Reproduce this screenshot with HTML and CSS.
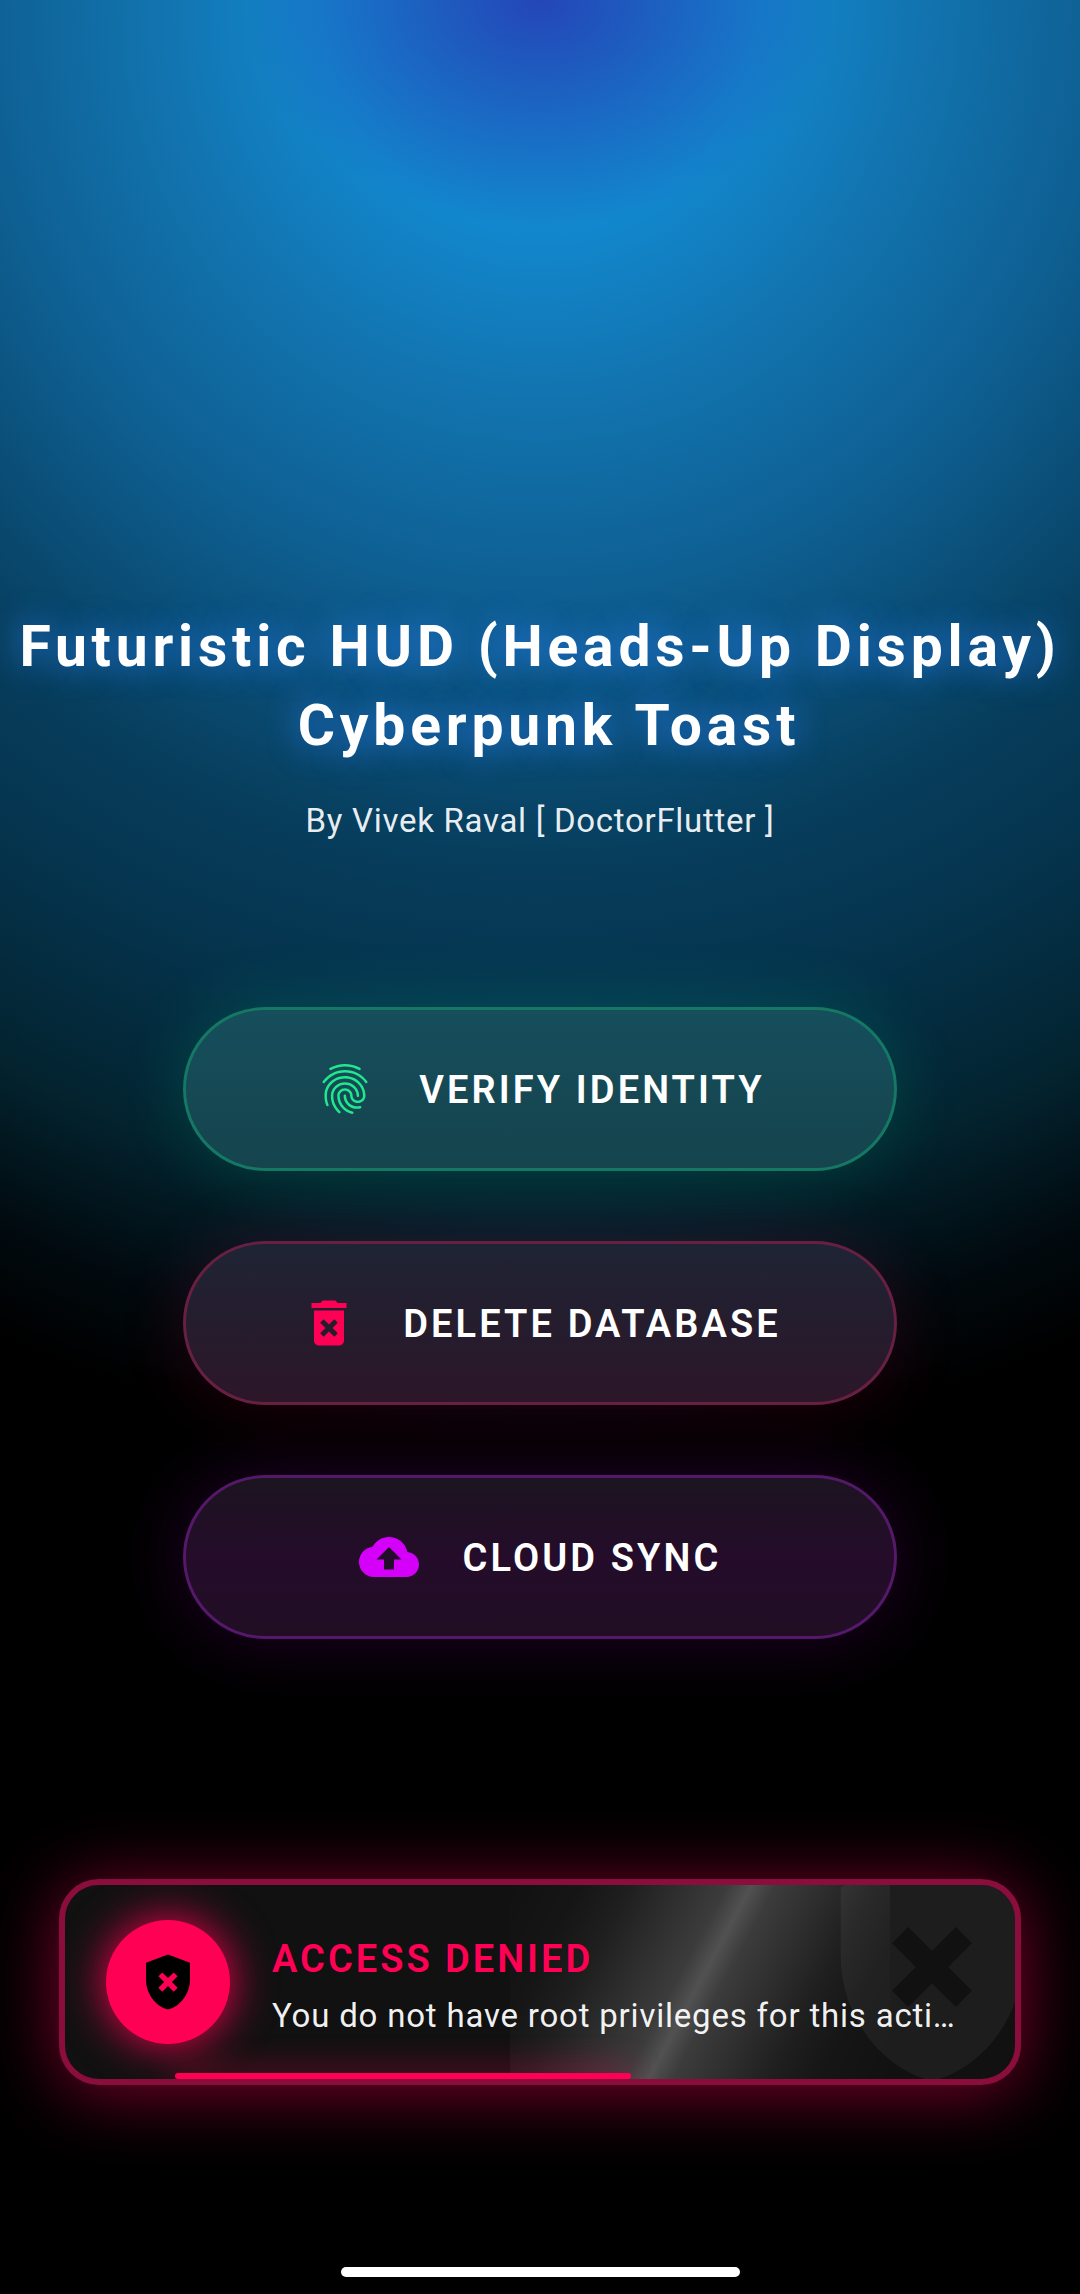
FILE: index.html
```html
<!DOCTYPE html>
<html lang="en">

<head>
  <meta charset="UTF-8">
  <meta name="viewport" content="width=device-width, initial-scale=1.0">
  <title>Cyberpunk Toast</title>
  <link rel="stylesheet" href="styles.css">
</head>

<body>
  <div class="hero">
    <h1 class="title">Futuristic HUD (Heads-Up Display)<br><span class="title_second">Cyberpunk Toast</span></h1>
    <p class="byline">By Vivek Raval [ DoctorFlutter ]</p>
  </div>

  <div class="actions">
    <button class="action verify">
      <svg class="action_icon" viewBox="0 0 24 24"><path d="M17.81 4.47c-.08 0-.16-.02-.23-.06C15.66 3.42 14 3 12.01 3c-1.98 0-3.86.47-5.57 1.41-.24.13-.54.04-.68-.2-.13-.24-.04-.55.2-.68C7.82 2.52 9.86 2 12.01 2c2.13 0 3.99.47 6.03 1.52.25.13.34.43.21.67-.09.18-.26.28-.44.28zM3.5 9.72c-.1 0-.2-.03-.29-.09-.23-.16-.28-.47-.12-.7.99-1.4 2.25-2.5 3.75-3.27C9.98 4.04 14 4.03 17.15 5.65c1.5.77 2.76 1.86 3.75 3.25.16.22.11.54-.12.7-.23.16-.54.11-.7-.12-.9-1.26-2.04-2.25-3.39-2.94-2.87-1.47-6.54-1.47-9.4.01-1.36.7-2.5 1.7-3.4 2.96-.08.14-.23.21-.39.21zm6.25 12.07c-.13 0-.26-.05-.35-.15-.87-.87-1.34-1.43-2.01-2.64-.69-1.23-1.05-2.73-1.05-4.34 0-2.97 2.54-5.39 5.66-5.39s5.66 2.42 5.66 5.39c0 .28-.22.5-.5.5s-.5-.22-.5-.5c0-2.42-2.09-4.39-4.66-4.39-2.57 0-4.66 1.97-4.66 4.39 0 1.44.32 2.77.93 3.85.64 1.15 1.08 1.64 1.85 2.42.19.2.19.51 0 .71-.11.1-.24.15-.37.15zm7.17-1.85c-1.19 0-2.24-.3-3.1-.89-1.49-1.01-2.38-2.65-2.38-4.39 0-.28.22-.5.5-.5s.5.22.5.5c0 1.41.72 2.74 1.94 3.56.71.48 1.54.71 2.54.71.24 0 .64-.03 1.04-.1.27-.05.53.13.58.41.05.27-.13.53-.41.58-.57.11-1.07.12-1.21.12zM14.91 22c-.04 0-.09-.01-.13-.02-1.59-.44-2.63-1.03-3.72-2.1-1.4-1.39-2.17-3.24-2.17-5.22 0-1.62 1.38-2.94 3.08-2.94 1.7 0 3.08 1.32 3.08 2.94 0 1.07.93 1.94 2.08 1.94s2.08-.87 2.08-1.94c0-3.77-3.25-6.83-7.25-6.83-2.84 0-5.44 1.58-6.61 4.03-.39.81-.59 1.76-.59 2.8 0 .78.07 2.01.67 3.61.1.26-.03.55-.29.64-.26.1-.55-.04-.64-.29-.49-1.31-.73-2.61-.73-3.96 0-1.2.23-2.29.68-3.24 1.33-2.79 4.28-4.6 7.51-4.6 4.55 0 8.25 3.51 8.25 7.83 0 1.62-1.38 2.94-3.08 2.94s-3.08-1.32-3.08-2.94c0-1.07-.93-1.94-2.08-1.94s-2.08.87-2.08 1.94c0 1.71.66 3.31 1.87 4.51.95.94 1.86 1.46 3.27 1.85.27.07.42.35.35.61-.05.23-.26.38-.47.38z"/></svg>
      <span>VERIFY IDENTITY</span>
    </button>
    <button class="action delete">
      <svg class="action_icon" viewBox="0 0 24 24"><path d="M6 19c0 1.1.9 2 2 2h8c1.1 0 2-.9 2-2V7H6v12zm2.46-7.12 1.41-1.41L12 12.59l2.12-2.12 1.41 1.41L13.41 14l2.12 2.12-1.41 1.41L12 15.41l-2.12 2.12-1.41-1.41L10.59 14l-2.13-2.12zM15.5 4l-1-1h-5l-1 1H5v2h14V4z"/></svg>
      <span>DELETE DATABASE</span>
    </button>
    <button class="action sync">
      <svg class="action_icon" viewBox="0 0 24 24"><path d="M19.35 10.04C18.67 6.59 15.64 4 12 4 9.11 4 6.6 5.64 5.35 8.04 2.34 8.36 0 10.91 0 14c0 3.31 2.69 6 6 6h13c2.76 0 5-2.24 5-5 0-2.64-2.05-4.78-4.65-4.96zM14 13v4h-4v-4H7l5-5 5 5h-3z"/></svg>
      <span>CLOUD SYNC</span>
    </button>
  </div>

  <div class="toast">
    <svg class="toast_mark" viewBox="0 0 24 24"><path fill-rule="evenodd" d="M12 2 4 5v6.09c0 5.05 3.41 9.76 8 10.91 4.59-1.15 8-5.86 8-10.91V5l-8-3zm3.5 12.09-1.41 1.41L12 13.42 9.91 15.5 8.5 14.09 10.59 12 8.5 9.91 9.91 8.5 12 10.59l2.09-2.09 1.41 1.41L13.42 12l2.09 2.09z"/></svg>
    <div class="toast_shine"></div>
    <div class="toast_badge">
      <svg class="toast_icon" viewBox="0 0 24 24"><path fill-rule="evenodd" d="M12 2 4 5v6.09c0 5.05 3.41 9.76 8 10.91 4.59-1.15 8-5.86 8-10.91V5l-8-3zm3.5 12.09-1.41 1.41L12 13.42 9.91 15.5 8.5 14.09 10.59 12 8.5 9.91 9.91 8.5 12 10.59l2.09-2.09 1.41 1.41L13.42 12l2.09 2.09z"/></svg>
    </div>
    <div class="toast_text">
      <div class="toast_title">ACCESS DENIED</div>
      <div class="toast_msg">You do not have root privileges for this acti…</div>
    </div>
    <div class="toast_progress"></div>
  </div>

  <div class="home_bar"></div>
</body>

</html>
```

FILE: styles.css
```css
* {
  box-sizing: border-box;
}

html,
body {
  margin: 0;
  height: 100%;
}

body {
  width: 1080px;
  height: 2294px;
  overflow: hidden;
  display: flex;
  flex-direction: column;
  align-items: center;
  color: white;
  font-family: Roboto, "Noto Sans", sans-serif;
  background-color: #000;
  background-image:
    radial-gradient(ellipse 296px 226px at 50% 0, rgb(36, 70, 184), rgba(18, 135, 205, 0) 100%),
    radial-gradient(ellipse 1380px 1450px at 50% 0, rgb(18, 135, 205) 0, rgb(18, 135, 205) 16%, rgb(18, 115, 174) 28%, rgb(14, 95, 146) 41%, rgb(7, 62, 93) 59%, rgb(5, 52, 78) 69%, rgb(3, 35, 47) 83%, rgb(1, 10, 15) 93%, rgb(0, 0, 0) 100%);
}

.hero {
  margin-top: 607px;
  text-align: center;
}

.title {
  margin: 0;
  font-size: 57px;
  line-height: 79px;
  font-weight: 700;
  letter-spacing: 4.8px;
  white-space: nowrap;
  text-shadow: 0 0 32px rgb(42, 125, 235);
}

.title_second {
  display: inline-block;
  margin-left: 18px;
}

.byline {
  margin: 36px 0 0;
  font-size: 33px;
  line-height: 40px;
  letter-spacing: .7px;
  color: rgba(255, 255, 255, .92);
}

.actions {
  margin-top: 166px;
  display: flex;
  flex-direction: column;
  gap: 70px;
}

.action {
  width: 714px;
  height: 164px;
  border-radius: 82px;
  border: 3px solid;
  display: flex;
  justify-content: center;
  align-items: center;
  gap: 44px;
  font-family: inherit;
  font-size: 38px;
  font-weight: 600;
  letter-spacing: 3.1px;
  color: white;
}

.action span {
  padding-top: 2px;
}

.action_icon {
  width: 60px;
  height: 60px;
  fill: currentColor;
  flex: none;
}

.verify {
  background: linear-gradient(rgb(22, 78, 92), rgb(21, 68, 77));
  border-color: rgb(20, 120, 100);
  box-shadow: 0 0 70px rgba(0, 255, 157, .14);
}

.verify .action_icon {
  color: #1fe88f;
}

.delete {
  background: linear-gradient(rgb(30, 36, 52), rgb(44, 22, 40));
  border-color: rgb(104, 32, 66);
  box-shadow: 0 0 70px rgba(255, 0, 85, .14);
}

.delete .action_icon {
  color: #ff0055;
}

.sync {
  background: linear-gradient(rgb(28, 20, 32), rgb(36, 12, 42) 50%, rgb(33, 14, 36));
  border-color: rgb(86, 24, 106);
  box-shadow: 0 0 70px rgba(213, 0, 249, .16);
}

.sync .action_icon {
  color: #d500f9;
}

.toast {
  position: relative;
  margin-top: 240px;
  width: 962px;
  height: 206px;
  border: 6px solid #8a0d3c;
  border-radius: 40px;
  background: #111;
  box-shadow: 0 6px 70px rgba(255, 0, 85, .5);
  display: flex;
  align-items: center;
  padding-left: 41px;
  gap: 42px;
  overflow: hidden;
}

.toast_mark {
  position: absolute;
  left: 730px;
  top: -55px;
  width: 274px;
  height: 274px;
  fill: rgba(255, 255, 255, .05);
}

.toast_shine {
  position: absolute;
  left: 445px;
  top: 0;
  width: 380px;
  height: 100%;
  background: linear-gradient(118deg, rgba(255, 255, 255, 0), rgba(255, 255, 255, .02) 15%, rgba(255, 255, 255, .06) 25%, rgba(255, 255, 255, .12) 35%, rgba(255, 255, 255, .18) 45%, rgba(255, 255, 255, .27) 50%, rgba(255, 255, 255, .18) 55%, rgba(255, 255, 255, .12) 65%, rgba(255, 255, 255, .06) 75%, rgba(255, 255, 255, .02) 85%, rgba(255, 255, 255, 0));
}

.toast_badge {
  position: relative;
  width: 124px;
  height: 124px;
  flex: none;
  border-radius: 50%;
  background: #ff0055;
  box-shadow: 0 0 45px rgb(255, 0, 85);
  display: flex;
  justify-content: center;
  align-items: center;
}

.toast_icon {
  width: 66px;
  height: 66px;
}

.toast_text {
  position: relative;
  margin-top: 8px;
}

.toast_title {
  font-size: 38px;
  line-height: 44px;
  font-weight: 600;
  letter-spacing: 3px;
  color: #ff0055;
}

.toast_msg {
  margin-top: 15px;
  font-size: 33px;
  line-height: 40px;
  letter-spacing: .8px;
  color: rgba(255, 255, 255, .95);
  white-space: nowrap;
}

.toast_progress {
  position: absolute;
  left: 110px;
  bottom: 0;
  width: 456px;
  height: 6px;
  border-radius: 3px;
  background: #ff0055;
  box-shadow: 0 0 32px rgb(255, 0, 85);
}

.home_bar {
  margin-top: 182px;
  width: 399px;
  height: 10px;
  border-radius: 5px;
  background: white;
}
```
